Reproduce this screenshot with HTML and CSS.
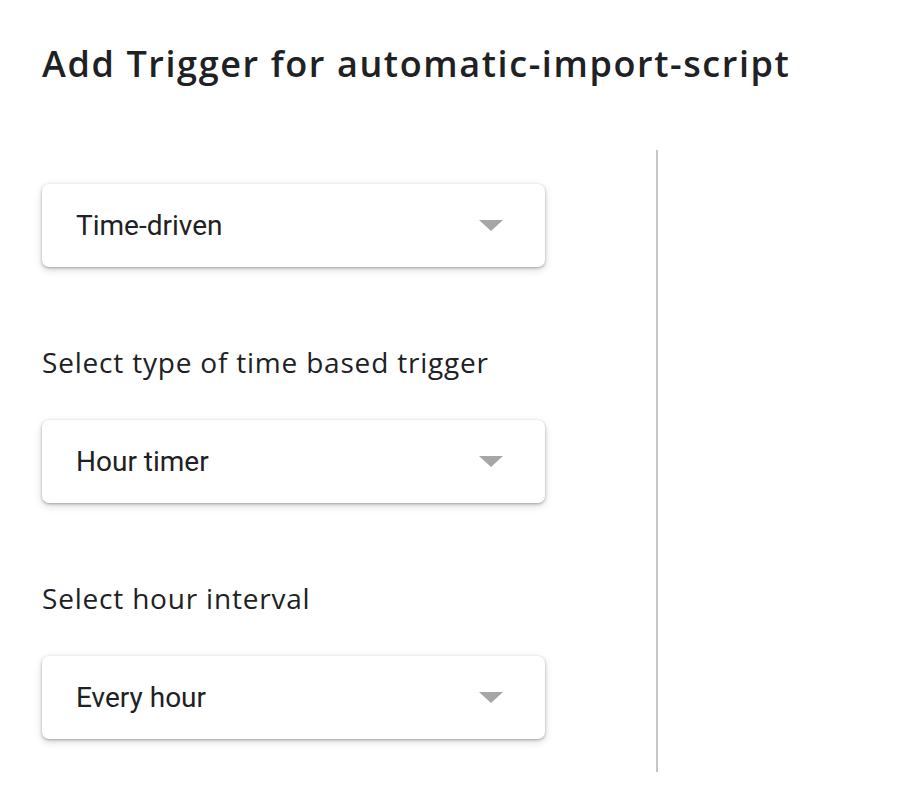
FILE: index.html
```html
<!DOCTYPE html>
<html lang="en">
<head>
  <meta charset="UTF-8" />
  <meta name="viewport" content="width=device-width, initial-scale=1" />
  <title>Add Trigger</title>
  <link rel="stylesheet" href="styles.css">
</head>
<body>

  <h1 class="titulo">Add Trigger for automatic-import-script</h1>

  <div class="panel">
    <div class="campos">
      <div class="selector">
        <span>Time-driven</span>
        <span class="flecha"></span>
      </div>

      <p class="etiqueta">Select type of time based trigger</p>
      <div class="selector">
        <span>Hour timer</span>
        <span class="flecha"></span>
      </div>

      <p class="etiqueta">Select hour interval</p>
      <div class="selector">
        <span>Every hour</span>
        <span class="flecha"></span>
      </div>
    </div>

    <div class="divisor"></div>
  </div>

</body>
</html>
```

FILE: styles.css
```css
body {
  margin: 0;
  padding: 0 0 0 42px;
  background: white;
  font-family: "Open Sans", sans-serif;
  color: #202124;
}
.titulo {
  margin: 0;
  padding-top: 40px;
  font-size: 36px;
  font-weight: 600;
  letter-spacing: 1.6px;
  line-height: 48px;
  height: 48px;
}
.panel {
  display: flex;
  margin-top: 62px;
}
.campos {
  width: 503px;
  padding-top: 34px;
}
.selector {
  display: flex;
  align-items: center;
  justify-content: space-between;
  box-sizing: border-box;
  height: 83px;
  padding: 0 42px 0 34px;
  background: white;
  border-radius: 7px;
  box-shadow: 0 1px 3px rgba(0,0,0,0.3), 0 3px 9px rgba(0,0,0,0.14);
  font-family: Roboto, sans-serif;
  font-size: 28px;
  color: #202124;
}
.flecha {
  width: 0;
  height: 0;
  border-left: 12px solid transparent;
  border-right: 12px solid transparent;
  border-top: 11px solid #a6a6a6;
}
.etiqueta {
  margin: 75px 0 38px;
  font-size: 28px;
  letter-spacing: 0.8px;
  line-height: 40px;
}
.divisor {
  width: 2px;
  height: 622px;
  margin-left: 111px;
  background: #c4c7ca;
}
```
